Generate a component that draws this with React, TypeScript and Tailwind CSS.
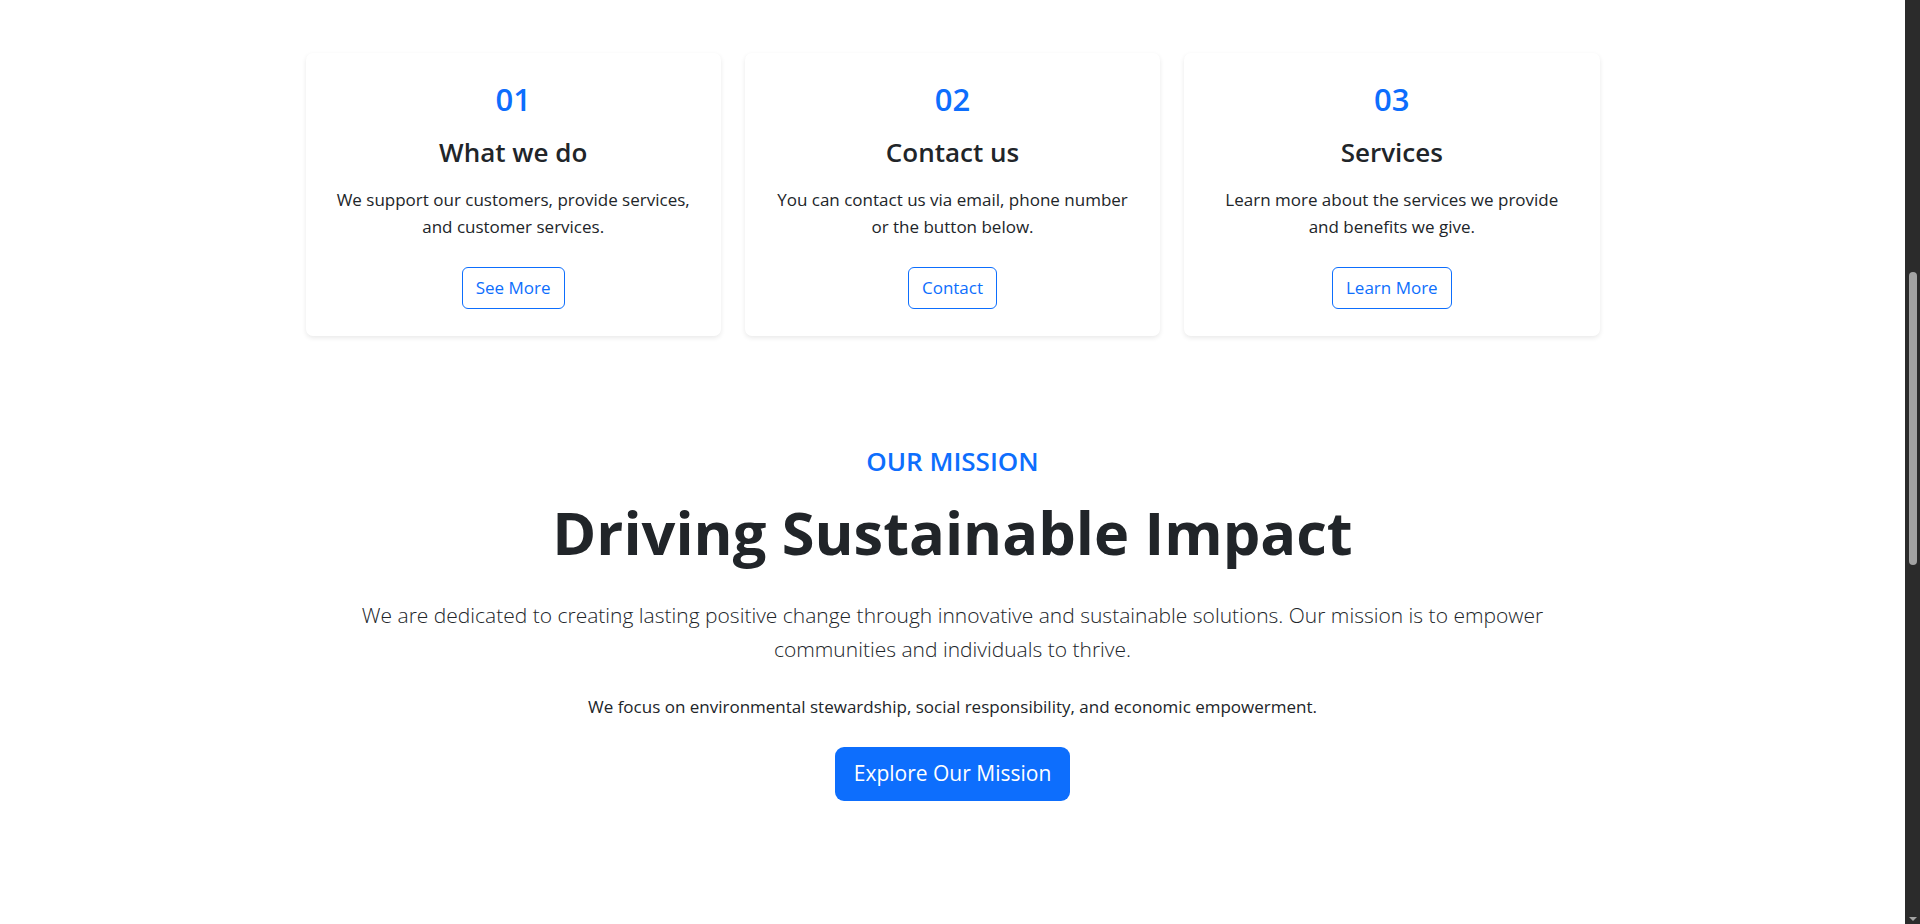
const cards = [
  {
    num: '01',
    title: 'What we do',
    text: ['We support our customers, provide services,', 'and customer services.'],
    cta: 'See More',
  },
  {
    num: '02',
    title: 'Contact us',
    text: ['You can contact us via email, phone number', 'or the button below.'],
    cta: 'Contact',
  },
  {
    num: '03',
    title: 'Services',
    text: ['Learn more about the services we provide', 'and benefits we give.'],
    cta: 'Learn More',
  },
];

function InfoCard({ num, title, text, cta }: (typeof cards)[number]) {
  return (
    <div className="flex flex-col items-center rounded-[7px] bg-white px-[27px] py-[27px] text-center shadow-[0_2px_5px_rgba(0,0,0,0.09)]">
      <h3 className="mb-[18px] text-[31px] font-semibold leading-[38px] text-[#0d6efd]">{num}</h3>
      <h4 className="mb-[18px] text-[26px] font-semibold leading-[32px] text-[#212529]">{title}</h4>
      <p className="mb-[27px] text-[17px] leading-[27px] text-[#212529]">
        {text[0]}
        <br />
        {text[1]}
      </p>
      <button className="h-[42px] rounded-[6px] border border-[#0d6efd] px-[13px] text-[17px] text-[#0d6efd]">
        {cta}
      </button>
    </div>
  );
}

export default function App() {
  return (
    <div className="flex h-screen w-full overflow-hidden bg-white font-['Open_Sans',sans-serif] text-[#212529]">
      <main className="flex-1">
        {/* Feature cards */}
        <section className="mx-auto w-[1294px] pt-[53px]">
          <div className="grid grid-cols-3 gap-6">
            {cards.map((c) => (
              <InfoCard key={c.num} {...c} />
            ))}
          </div>
        </section>

        {/* Mission */}
        <section className="mx-auto flex w-[1296px] flex-col items-center pt-[109px] text-center">
          <h4 className="mb-[17px] text-[26px] font-semibold uppercase leading-[32px] text-[#0d6efd]">Our Mission</h4>
          <h1 className="mb-[28px] text-[59.5px] font-bold leading-[76px] text-[#212529]">Driving Sustainable Impact</h1>
          <p className="mb-[27px] text-[21px] font-light leading-[34px] text-[#212529]">
            We are dedicated to creating lasting positive change through innovative and sustainable solutions. Our mission is to empower
            communities and individuals to thrive.
          </p>
          <p className="mb-[27px] text-[17px] leading-[27px]">
            We focus on environmental stewardship, social responsibility, and economic empowerment.
          </p>
          <button className="h-[54px] rounded-[9px] bg-[#0d6efd] px-[19px] text-[21px] text-white">
            Explore Our Mission
          </button>
        </section>
      </main>

      {/* browser scrollbar */}
      <div className="flex w-[15px] flex-col items-center bg-[#2b2b2b]">
        <div className="mt-[272px] h-[293px] w-[8px] rounded-full bg-[#a3a3a3]" />
        <div className="mt-auto mb-[3px] h-0 w-0 border-x-[4px] border-t-[4px] border-x-transparent border-t-[#a3a3a3]" />
      </div>
    </div>
  );
}
